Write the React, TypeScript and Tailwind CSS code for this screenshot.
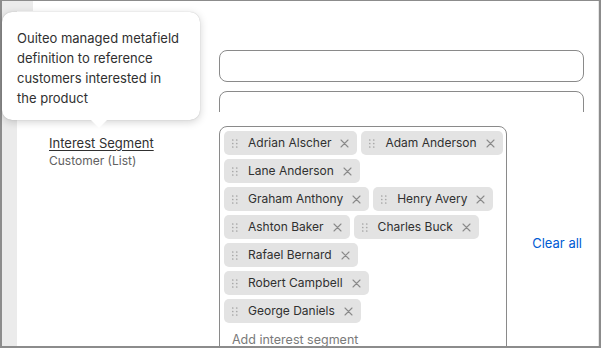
import React from "react";

const rows = [
  ["Adrian Alscher", "Adam Anderson"],
  ["Lane Anderson"],
  ["Graham Anthony", "Henry Avery"],
  ["Ashton Baker", "Charles Buck"],
  ["Rafael Bernard"],
  ["Robert Campbell"],
  ["George Daniels"],
];

function DragHandle() {
  return (
    <svg width="6" height="9" viewBox="0 0 6 9" className="shrink-0">
      {[0, 3.5, 7].map((y) =>
        [0.75, 4.75].map((x) => (
          <circle key={`${x}-${y}`} cx={x} cy={y + 1} r="0.85" fill="#a8a8a8" />
        ))
      )}
    </svg>
  );
}

function CloseX() {
  return (
    <svg width="9" height="9" viewBox="0 0 9 9" className="shrink-0">
      <path d="M1 1L8 8M8 1L1 8" stroke="#8a8a8a" strokeWidth="1.1" strokeLinecap="round" />
    </svg>
  );
}

function Tag({ name }: { name: string }) {
  return (
    <div className="flex h-[24px] shrink-0 items-center rounded-[5px] bg-[#e3e3e3] pl-[8px] pr-[8px] text-[12px] text-[#303030]">
      <DragHandle />
      <span className="ml-[10px] mr-[9px] whitespace-nowrap leading-none">{name}</span>
      <CloseX />
    </div>
  );
}

export default function App() {
  return (
    <div className="relative h-[349px] w-[601px] overflow-hidden bg-white font-['Inter',sans-serif]">
      <div className="flex h-[348px] w-[601px] border-t border-l-2 border-r-2 border-b-2 border-[#8c8c8c]">
        <div className="w-[15px] shrink-0 bg-[#ebebeb]" />
        <div className="flex min-h-0 flex-1 flex-col overflow-hidden border-r border-[#e6e6e6]">
          <div className="h-[10px] w-[16px] shrink-0 bg-[#ebebeb]" />
          <div className="h-[101px] shrink-0 overflow-hidden pl-[202px] pr-[14px] pt-[39px]">
            <div className="h-[32px] rounded-[8px] border border-[#8a8a8a] bg-white" />
            <div className="mt-[9px] h-[32px] rounded-[8px] border border-[#8a8a8a] bg-white" />
          </div>
          <div className="mt-[14px] flex shrink-0">
            <div className="w-[202px] shrink-0 pl-[32px] pt-[8px]">
              <div className="text-[13px] leading-[18px] text-[#303030] underline underline-offset-2">
                Interest Segment
              </div>
              <div className="text-[12px] leading-[18px] text-[#616161]">Customer (List)</div>
            </div>
            <div className="flex w-[363px] items-center justify-between">
              <div className="w-[288px] rounded-[8px] border border-[#8a8a8a] p-[4px]">
                <div className="flex flex-col gap-[4px]">
                  {rows.map((r, i) => (
                    <div key={i} className="flex gap-[4px]">
                      {r.map((n) => (
                        <Tag key={n} name={n} />
                      ))}
                    </div>
                  ))}
                </div>
                <div className="px-[8px] pb-[7px] pt-[8px] text-[12.5px] leading-[18px] text-[#7a7a7a]">
                  Add interest segment
                </div>
              </div>
              <span className="text-[13px] text-[#005bd3]">Clear all</span>
            </div>
          </div>
        </div>
      </div>

      <div className="absolute left-[2px] top-[12px] w-[198px] rounded-[10px] bg-white pb-[12px] pl-[15px] pr-[16px] pt-[16px] text-[13px] leading-[20px] text-[#303030] shadow-[0_2px_8px_rgba(0,0,0,0.18),0_0_1px_rgba(0,0,0,0.25)]">
        Ouiteo managed metafield definition to reference customers interested in the product
        <div className="absolute left-[89px] top-full h-0 w-0 border-x-[8px] border-t-[8px] border-x-transparent border-t-white" />
      </div>
    </div>
  );
}
